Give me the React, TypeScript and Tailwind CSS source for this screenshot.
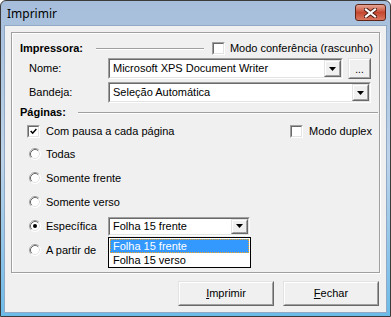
import React from "react";

const font = { fontFamily: '"Liberation Sans", Arial, sans-serif' };

// caixa rebaixada estilo Windows clássico
function Sunken({ className = "", children }: { className?: string; children?: React.ReactNode }) {
	return (
		<div className={`border border-t-[#a0a0a0] border-l-[#a0a0a0] border-b-white border-r-white ${className}`}>
			<div className="h-full w-full border border-t-[#696969] border-l-[#696969] border-b-[#e3e3e3] border-r-[#e3e3e3] bg-white flex items-center">
				{children}
			</div>
		</div>
	);
}

function Raised({ className = "", children }: { className?: string; children?: React.ReactNode }) {
	return (
		<div className={`border border-t-[#e3e3e3] border-l-[#e3e3e3] border-b-[#696969] border-r-[#696969] ${className}`}>
			<div className="h-full w-full border border-t-white border-l-white border-b-[#a0a0a0] border-r-[#a0a0a0] bg-[#f0f0f0] flex items-center justify-center">
				{children}
			</div>
		</div>
	);
}

function Arrow() {
	return (
		<svg width="7" height="4" viewBox="0 0 7 4">
			<polygon points="0,0 7,0 3.5,4" fill="#000" />
		</svg>
	);
}

function Combo({ text, className = "" }: { text: string; className?: string }) {
	return (
		<Sunken className={className}>
			<span className="flex-1 pl-[3px] truncate">{text}</span>
			<Raised className="w-[17px] h-full">
				<Arrow />
			</Raised>
		</Sunken>
	);
}

function CheckBox({ checked = false }: { checked?: boolean }) {
	return (
		<Sunken className="w-[13px] h-[13px] shrink-0">
			{checked && (
				<svg width="11" height="11" viewBox="0 0 11 11">
					<path d="M2 5 L4.5 7.5 L9 2.5" stroke="#000" strokeWidth="1.8" fill="none" />
				</svg>
			)}
		</Sunken>
	);
}

function Radio({ checked = false }: { checked?: boolean }) {
	return (
		<svg width="12" height="12" viewBox="0 0 12 12" className="shrink-0">
			<circle cx="6" cy="6" r="5.5" fill="#fff" />
			<path d="M2.11 9.89 A5.5 5.5 0 0 1 9.89 2.11" stroke="#a0a0a0" fill="none" />
			<path d="M9.89 2.11 A5.5 5.5 0 0 1 2.11 9.89" stroke="#fff" fill="none" />
			<path d="M2.82 9.18 A4.5 4.5 0 0 1 9.18 2.82" stroke="#696969" fill="none" />
			<path d="M9.18 2.82 A4.5 4.5 0 0 1 2.82 9.18" stroke="#e3e3e3" fill="none" />
			{checked && <circle cx="6" cy="6" r="2" fill="#000" />}
		</svg>
	);
}

function GroupLine() {
	return <div className="flex-1 h-[2px] border-t border-t-[#a0a0a0] border-b border-b-white" />;
}

function RadioRow({ label, checked = false, children }: { label: string; checked?: boolean; children?: React.ReactNode }) {
	return (
		<div className="h-[24px] flex items-center pl-[17px] whitespace-nowrap">
			<Radio checked={checked} />
			<span className="ml-[5px] w-[62px] shrink-0">{label}</span>
			{children}
		</div>
	);
}

export default function App() {
	return (
		<div
			className="w-[391px] h-[317px] rounded-t-[6px] border border-[#3b3b3b] bg-linear-to-b from-[#a6bedb] via-[#bcd3ea] to-[#6bbbe9] flex flex-col text-[11px] text-black"
			style={font}
		>
			{/* barra de título */}
			<div className="h-[24px] flex items-start shrink-0">
				<span className="ml-[6px] mt-[4px] text-[12px] text-[#000]" style={{ fontFamily: '"Noto Sans", sans-serif' }}>
					Imprimir
				</span>
				<div className="ml-auto mr-[4px] mt-[3px] w-[31px] h-[17px] rounded-[3px] border border-[#5e2418] bg-linear-to-b from-[#e5a695] via-[#c5472f] to-[#d9775f] flex items-center justify-center">
					<svg width="13" height="10" viewBox="0 0 13 10">
						<path d="M2 1.5 L11 8.5 M11 1.5 L2 8.5" stroke="#4a1a10" strokeWidth="4" strokeLinecap="square" />
						<path d="M2 1.5 L11 8.5 M11 1.5 L2 8.5" stroke="#fff" strokeWidth="2.2" strokeLinecap="square" />
					</svg>
				</div>
			</div>

			{/* área cliente */}
			<div className="flex-1 mx-[3px] mb-[3px] bg-[#f0f0f0] border border-[#91a9c4] flex flex-col">
				<div className="mt-[6px] mx-[6px] h-[241px] border border-[#a0a0a0] shadow-[inset_1px_1px_0_#fff,1px_1px_0_#fff] relative flex flex-col">
					{/* Impressora */}
					<div className="mt-[8px] h-[15px] flex items-center pl-[8px] pr-[6px]">
						<span className="font-bold">Impressora:</span>
						<div className="ml-[13px] mr-[8px] flex-1 flex">
							<GroupLine />
						</div>
						<CheckBox />
						<span className="ml-[5px]">Modo conferência (rascunho)</span>
					</div>

					<div className="mt-[2px] h-[21px] flex items-center pl-[17px]">
						<span className="w-[79px]">Nome:</span>
						<Combo text="Microsoft XPS Document Writer" className="w-[235px] h-[21px]" />
						<Raised className="ml-[5px] w-[23px] h-[21px]">
							<span className="text-[10px] leading-none mt-[3px]">...</span>
						</Raised>
					</div>

					<div className="mt-[3px] h-[21px] flex items-center pl-[17px]">
						<span className="w-[79px]">Bandeja:</span>
						<Combo text="Seleção Automática" className="w-[263px] h-[21px]" />
					</div>

					{/* Páginas */}
					<div className="mt-[2px] h-[15px] flex items-center pl-[8px] pr-[1px]">
						<span className="font-bold">Páginas:</span>
						<div className="ml-[12px] flex-1 flex">
							<GroupLine />
						</div>
					</div>

					<div className="mt-[4px] h-[14px] flex items-center pl-[15px] pr-[7px]">
						<CheckBox checked />
						<span className="ml-[6px]">Com pausa a cada página</span>
						<div className="ml-auto flex items-center">
							<CheckBox />
							<span className="ml-[6px]">Modo duplex</span>
						</div>
					</div>

					<div className="mt-[4px] flex flex-col">
						<RadioRow label="Todas" />
						<RadioRow label="Somente frente" />
						<RadioRow label="Somente verso" />
						<RadioRow label="Específica" checked>
							<Combo text="Folha 15 frente" className="w-[142px] h-[19px]" />
						</RadioRow>
						<RadioRow label="A partir de" />
					</div>

					{/* lista aberta */}
					<div className="absolute left-[96px] top-[204px] w-[143px] h-[31px] border border-black bg-white flex flex-col p-[1px]">
						<div className="h-[14px] bg-[#3399ff] text-white pl-[3px] flex items-center outline-1 outline-dotted outline-[#f5a623] -outline-offset-1">
							Folha 15 frente
						</div>
						<div className="h-[14px] pl-[3px] flex items-center">Folha 15 verso</div>
					</div>
				</div>

				{/* botões */}
				<div className="mt-[8px] flex justify-end gap-[9px] pr-[7px]">
					<Raised className="w-[96px] h-[25px]">
						<span>
							<span className="underline">I</span>mprimir
						</span>
					</Raised>
					<Raised className="w-[96px] h-[25px]">
						<span>
							<span className="underline">F</span>echar
						</span>
					</Raised>
				</div>
			</div>
		</div>
	);
}
